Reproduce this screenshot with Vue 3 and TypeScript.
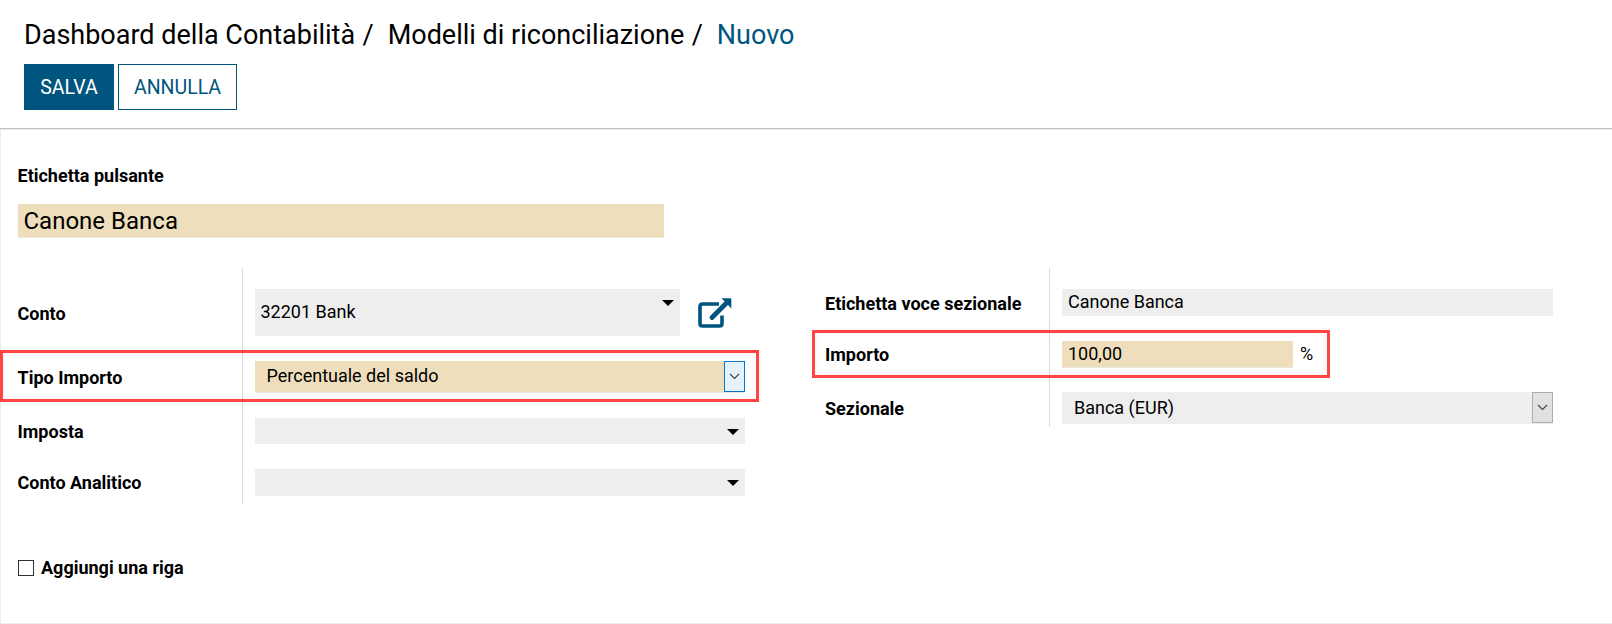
<script setup lang="ts">
import { ref } from 'vue'

const buttonLabel = ref('Canone Banca')
const account = ref('32201 Bank')
const amountType = ref('Percentuale del saldo')
const tax = ref('')
const analyticAccount = ref('')
const itemLabel = ref('Canone Banca')
const amount = ref('100,00')
const journal = ref('Banca (EUR)')
const addLine = ref(false)
</script>

<template>
  <div class="page">
    <header class="control-panel">
      <nav class="breadcrumb">
        <span class="crumb">Dashboard della Contabilità</span><span class="sep">/</span>
        <span class="crumb second">Modelli di riconciliazione</span><span class="sep">/</span>
        <span class="crumb current">Nuovo</span>
      </nav>
      <div class="buttons">
        <button class="btn primary">SALVA</button>
        <button class="btn secondary">ANNULLA</button>
      </div>
    </header>

    <main class="sheet">
      <label class="title-label">Etichetta pulsante</label>
      <input v-model="buttonLabel" class="title-input" />

      <div class="groups">
        <section class="group left">
          <div class="row tall">
            <label>Conto</label>
            <div class="cell">
              <div class="field account">
                <input v-model="account" />
                <svg class="caret" width="12" height="6" viewBox="0 0 12 6"><path d="M0 0H12L6 6Z" /></svg>
              </div>
              <svg class="external" width="35" height="31" viewBox="0 0 35 31">
                <path d="M22 6H5.500Q3 6 3 8.500V25.500Q3 28 5.500 28H22.500Q25 28 25 25.500V17.500" fill="none" stroke="#00557f" stroke-width="3.600" />
                <path d="M15 19.500L29 5.500" fill="none" stroke="#00557f" stroke-width="4.800" stroke-linecap="round" />
                <path d="M24.500 0.300H33.300Q34.300 0.300 34.300 1.300V10.500Z" fill="#00557f" />
              </svg>
            </div>
          </div>
          <div class="row select highlighted">
            <label>Tipo Importo</label>
            <div class="cell">
              <div class="field required">
                <input v-model="amountType" />
                <span class="toggle focused"><svg width="11" height="7" viewBox="0 0 11 7"><path d="M1 1L5.500 5.500L10 1" /></svg></span>
              </div>
            </div>
          </div>
          <div class="row short">
            <label>Imposta</label>
            <div class="cell">
              <div class="field">
                <input v-model="tax" />
                <svg class="caret" width="12" height="6" viewBox="0 0 12 6"><path d="M0 0H12L6 6Z" /></svg>
              </div>
            </div>
          </div>
          <div class="row">
            <label>Conto Analitico</label>
            <div class="cell">
              <div class="field">
                <input v-model="analyticAccount" />
                <svg class="caret" width="12" height="6" viewBox="0 0 12 6"><path d="M0 0H12L6 6Z" /></svg>
              </div>
            </div>
          </div>
        </section>

        <section class="group right">
          <div class="row">
            <label>Etichetta voce sezionale</label>
            <div class="cell">
              <div class="field"><input v-model="itemLabel" /></div>
            </div>
          </div>
          <div class="row short highlighted">
            <label>Importo</label>
            <div class="cell">
              <div class="field required amount"><input v-model="amount" /></div>
              <span class="unit">%</span>
            </div>
          </div>
          <div class="row select">
            <label>Sezionale</label>
            <div class="cell">
              <div class="field">
                <input v-model="journal" />
                <span class="toggle"><svg width="11" height="7" viewBox="0 0 11 7"><path d="M1 1L5.500 5.500L10 1" /></svg></span>
              </div>
            </div>
          </div>
        </section>
      </div>

      <label class="add-line">
        <input v-model="addLine" type="checkbox" />
        <span>Aggiungi una riga</span>
      </label>
    </main>
  </div>
</template>

<style>
body {
  margin: 0;
  background: #fff;
}
</style>

<style scoped>
.page {
  width: 1612px;
  height: 624px;
  overflow: hidden;
  display: flex;
  flex-direction: column;
  color: #000;
  font: 18px/26px Roboto, sans-serif;
}
.page *,
.page *::after,
.page {
  box-sizing: border-box;
}
input,
button {
  font: inherit;
  color: inherit;
  margin: 0;
  border: 0;
  border-radius: 0;
  outline: 0;
  background: none;
}
.control-panel {
  height: 129px;
  flex: none;
  padding: 19px 24px 0;
  border-bottom: 1px solid #c0c0c0;
}
.breadcrumb {
  display: flex;
  font-size: 27px;
  line-height: 32px;
  height: 45px;
  white-space: nowrap;
}
.sep {
  margin: 0 14px 0 7.4px;
}
.current {
  color: #00557f;
}
.buttons {
  display: flex;
  gap: 4px;
}
.btn {
  height: 46px;
  padding: 2px 0 0;
  font-size: 19.5px;
  border: 1px solid #00557f;
}
.primary {
  width: 90px;
  background: #00557f;
  color: #fff;
}
.secondary {
  width: 119px;
  color: #00557f;
}
.sheet {
  flex: 1;
  border: 1px solid #ececec;
  border-right: 0;
  padding: 33px 0 0 17px;
}
.title-label {
  display: block;
  margin-left: -0.5px;
  font-weight: 700;
}
.title-input {
  display: block;
  width: 646px;
  height: 34px;
  margin-top: 15px;
  padding: 0 5.5px;
  font-size: 24px;
  background: #efdebc;
  border-bottom: 1px solid #f3ebda;
}
.groups {
  display: flex;
  align-items: flex-start;
  margin-top: 30px;
  gap: 80px;
}
.group {
  display: flex;
  flex-direction: column;
  gap: 25px;
  padding: 21px 0 8px;
  background: linear-gradient(#dadada, #dadada) 224px 0 / 1px 100% no-repeat;
}
.left {
  width: 727px;
}
.right {
  width: 728px;
  padding-bottom: 3px;
}
.row {
  position: relative;
  display: grid;
  grid-template-columns: 237px 491px;
  grid-template-rows: 100%;
  height: 27px;
}
.left .row {
  grid-template-columns: 237px 490px;
}
.row.short {
  height: 26px;
}
.row.tall {
  height: 47px;
}
.row.select {
  height: 32px;
}
.row > label {
  align-self: center;
  padding-top: 1px;
  font-weight: 700;
  white-space: nowrap;
}
.tall > label,
.select > label,
.right .row:first-child > label {
  padding-top: 2px;
}
.left .row > label {
  margin-left: -0.5px;
}
.cell {
  display: flex;
}
.field {
  display: flex;
  width: 100%;
  background: #eee;
}
.field input {
  flex: 1;
  min-width: 0;
  height: 25px;
  padding: 0 6px;
}
.select .field input {
  height: 30px;
  padding: 0 12px;
}
.account {
  width: 425px;
}
.tall .field input {
  height: 44px;
  padding: 0 5.5px;
}
.left .select .field input {
  height: 28px;
  padding: 0 11.5px;
}
.required {
  background: #efdebc;
  border-bottom: 1px solid #eae7e0;
}
.required.amount {
  width: 231px;
  height: 27px;
}
.unit {
  margin-left: 7px;
}
.caret {
  margin: 11px 6px 0 0;
}
.external {
  margin: 9px 0 0 17px;
}
.toggle {
  display: flex;
  align-items: center;
  justify-content: center;
  width: 21px;
  height: 31px;
  border: 1px solid #adadad;
  background: #e1e1e1;
}
.toggle path {
  fill: none;
  stroke: #444;
  stroke-width: 1.2;
}
.toggle.focused {
  border-color: #0078d7;
  background: #e5f1fb;
}
.highlighted::after {
  content: '';
  position: absolute;
  border: 3px solid #ff4444;
  box-shadow: 0 0 6px rgba(0, 0, 0, 0.05), inset 0 0 6px rgba(0, 0, 0, 0.05);
  pointer-events: none;
}
.left .highlighted::after {
  left: -18px;
  top: -11px;
  width: 759px;
  height: 52px;
}
.right .highlighted::after {
  left: -13px;
  top: -11px;
  width: 518px;
  height: 48px;
}
.add-line {
  display: flex;
  align-items: center;
  gap: 7px;
  margin-top: 51px;
  font-weight: 700;
}
.add-line input {
  appearance: none;
  width: 16px;
  height: 16px;
  border: 1px solid #333;
  background: #fff;
}
</style>
